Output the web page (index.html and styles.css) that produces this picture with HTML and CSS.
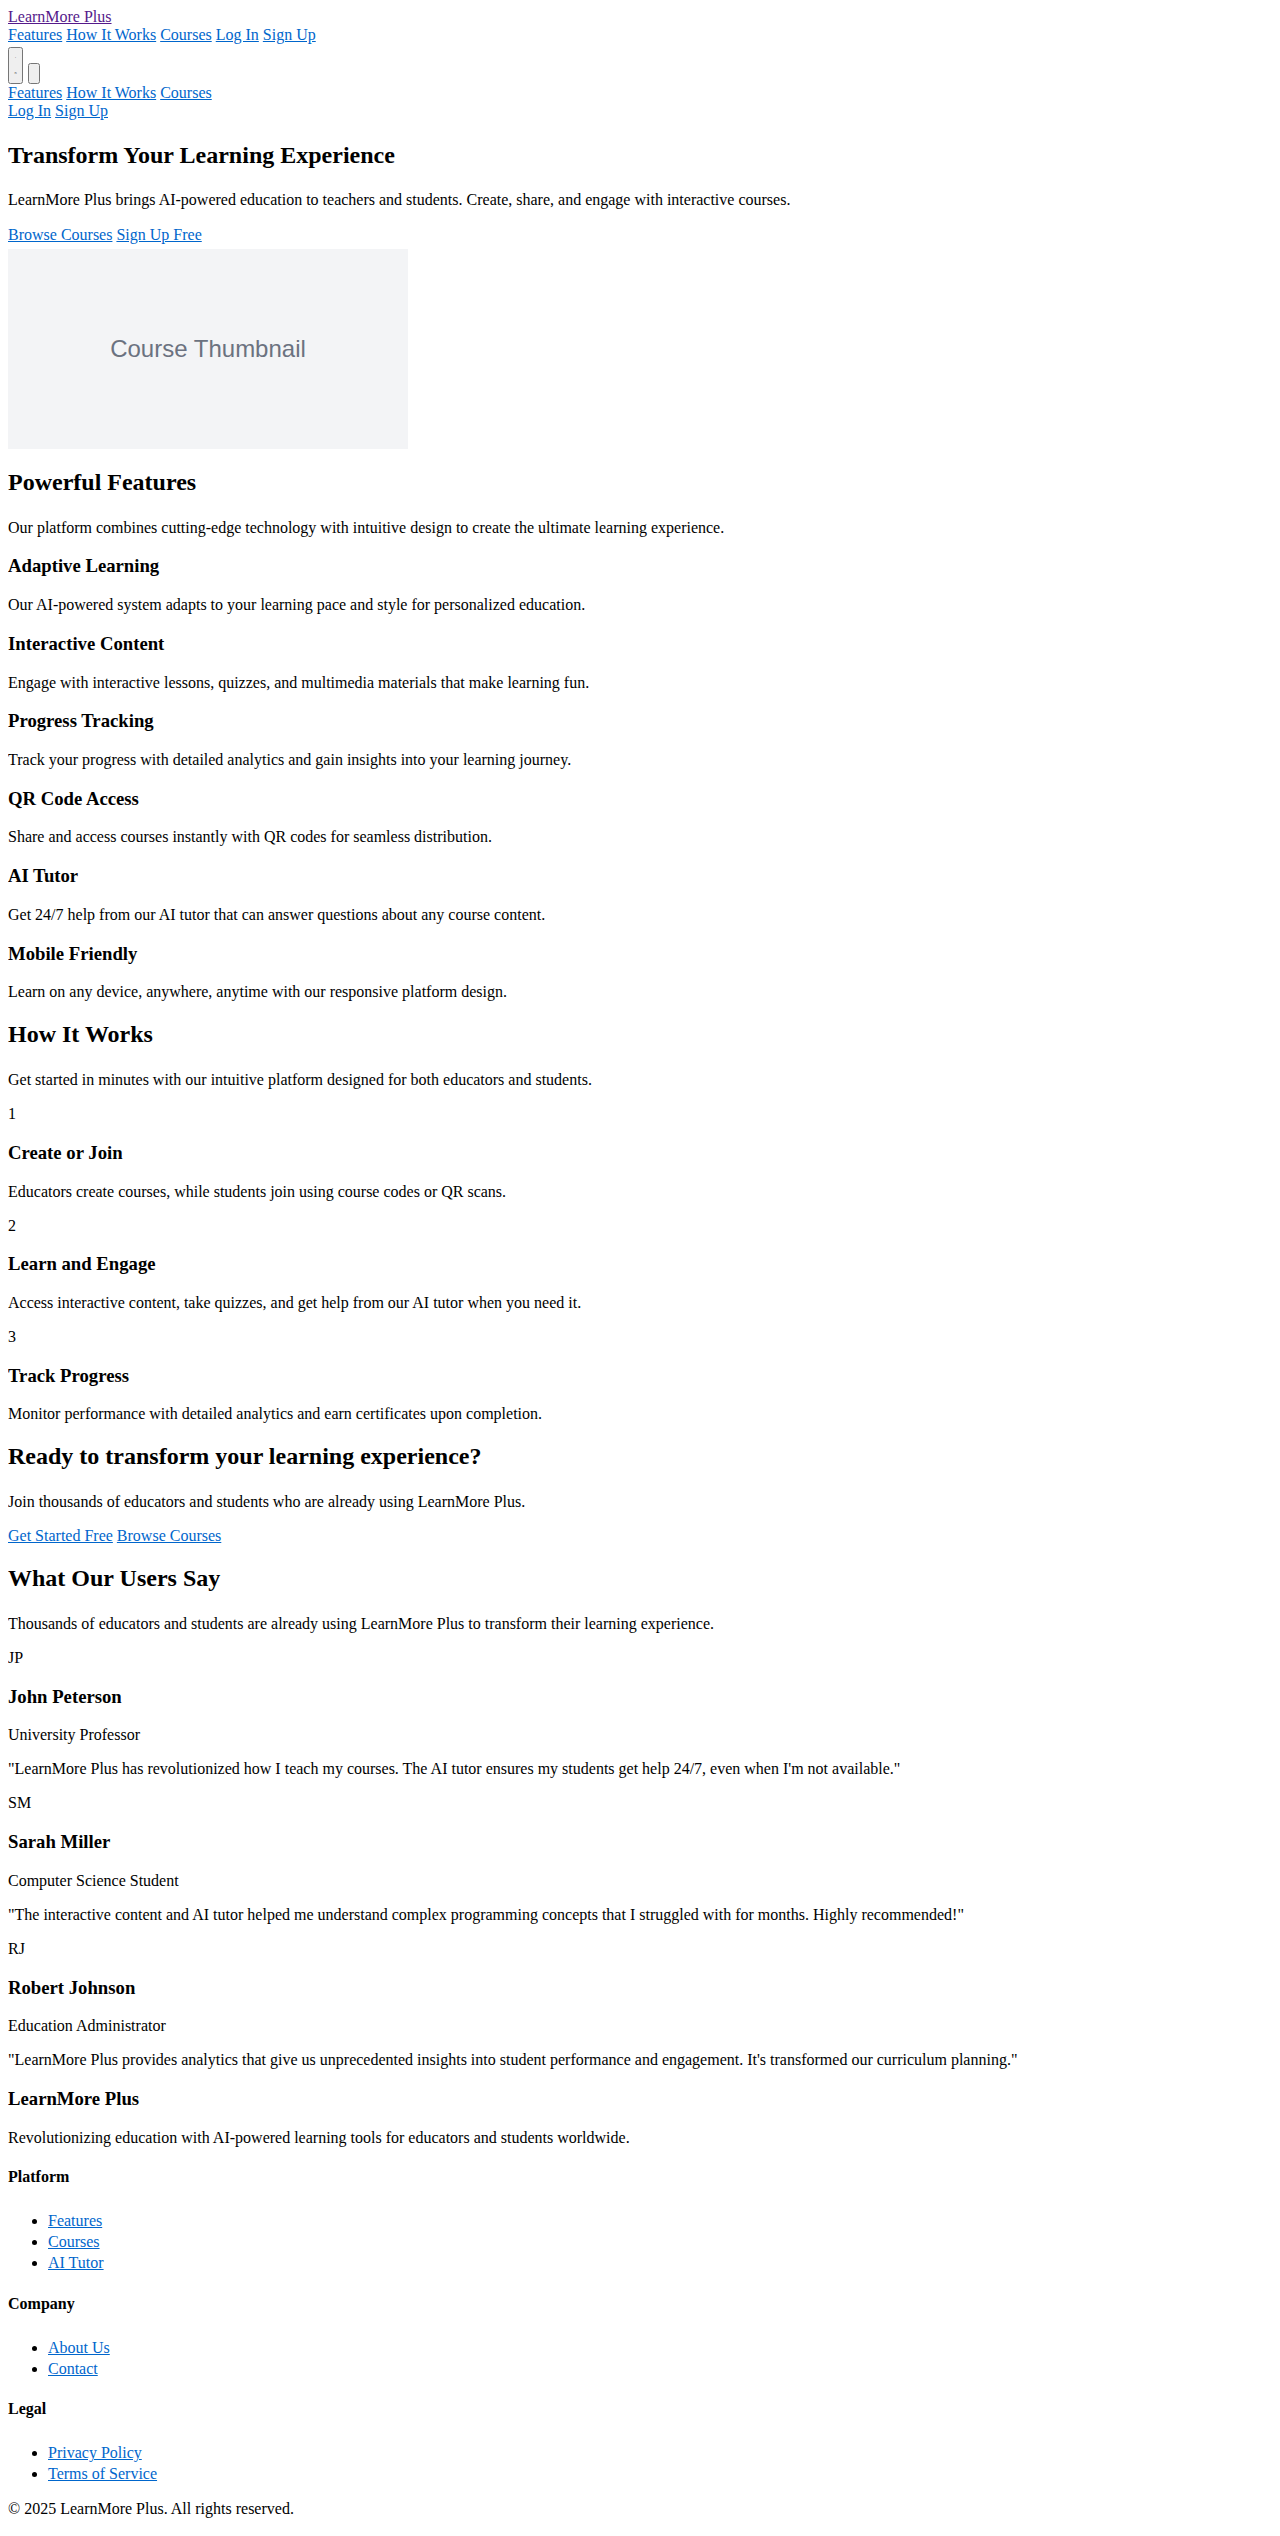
FILE: index.html
```html
<!DOCTYPE html>
<html lang="en">
<head>
<meta charset="utf-8">
<title>LearnMore Plus</title>
<link rel="stylesheet" href="styles.css">
</head>
<body class="page">
<header class="site-header">
  <div class="brand-row"><a class="link visited" href="#">LearnMore Plus</a></div>
  <nav class="nav-row">
    <a class="link" href="#features">Features</a>
    <a class="link" href="#how">How It Works</a>
    <a class="link" href="#courses">Courses</a>
    <a class="link" href="#login">Log In</a>
    <a class="link" href="#signup">Sign Up</a>
  </nav>
  <div class="btn-row">
    <button class="menu-btn" type="button"><span class="mark">&#183;</span><span class="mark">&#8319;</span></button>
    <button class="theme-btn" type="button"></button>
  </div>
  <div class="mobile-nav">
    <a class="link" href="#features">Features</a>
    <a class="link" href="#how">How It Works</a>
    <a class="link" href="#courses">Courses</a>
  </div>
  <div class="mobile-auth">
    <a class="link" href="#login">Log In</a>
    <a class="link" href="#signup">Sign Up</a>
  </div>
</header>

<main>
  <section class="hero">
    <h1 class="h1">Transform Your Learning Experience</h1>
    <p class="p">LearnMore Plus brings AI-powered education to teachers and students. Create, share, and engage with interactive courses.</p>
    <div class="hero-cta">
      <a class="link" href="#courses">Browse Courses</a>
      <a class="link" href="#signup">Sign Up Free</a>
    </div>
    <div class="thumb"><span class="thumb-text">Course Thumbnail</span></div>
  </section>

  <section class="features" id="features">
    <h2 class="h2">Powerful Features</h2>
    <p class="p">Our platform combines cutting-edge technology with intuitive design to create the ultimate learning experience.</p>
    <div class="feature">
      <h3 class="h3">Adaptive Learning</h3>
      <p class="p">Our AI-powered system adapts to your learning pace and style for personalized education.</p>
    </div>
    <div class="feature">
      <h3 class="h3">Interactive Content</h3>
      <p class="p">Engage with interactive lessons, quizzes, and multimedia materials that make learning fun.</p>
    </div>
    <div class="feature">
      <h3 class="h3">Progress Tracking</h3>
      <p class="p">Track your progress with detailed analytics and gain insights into your learning journey.</p>
    </div>
    <div class="feature">
      <h3 class="h3">QR Code Access</h3>
      <p class="p">Share and access courses instantly with QR codes for seamless distribution.</p>
    </div>
    <div class="feature">
      <h3 class="h3">AI Tutor</h3>
      <p class="p">Get 24/7 help from our AI tutor that can answer questions about any course content.</p>
    </div>
    <div class="feature">
      <h3 class="h3">Mobile Friendly</h3>
      <p class="p">Learn on any device, anywhere, anytime with our responsive platform design.</p>
    </div>
  </section>

  <section class="how" id="how">
    <h2 class="h2">How It Works</h2>
    <p class="p">Get started in minutes with our intuitive platform designed for both educators and students.</p>
    <div class="step">
      <div class="step-num">1</div>
      <h3 class="h3">Create or Join</h3>
      <p class="p">Educators create courses, while students join using course codes or QR scans.</p>
    </div>
    <div class="step">
      <div class="step-num">2</div>
      <h3 class="h3">Learn and Engage</h3>
      <p class="p">Access interactive content, take quizzes, and get help from our AI tutor when you need it.</p>
    </div>
    <div class="step">
      <div class="step-num">3</div>
      <h3 class="h3">Track Progress</h3>
      <p class="p">Monitor performance with detailed analytics and earn certificates upon completion.</p>
    </div>
  </section>

  <section class="cta">
    <h2 class="h2">Ready to transform your learning experience?</h2>
    <p class="p">Join thousands of educators and students who are already using LearnMore Plus.</p>
    <div class="cta-row">
      <a class="link" href="#signup">Get Started Free</a>
      <a class="link" href="#courses">Browse Courses</a>
    </div>
  </section>

  <section class="testimonials">
    <h2 class="h2">What Our Users Say</h2>
    <p class="p">Thousands of educators and students are already using LearnMore Plus to transform their learning experience.</p>
    <div class="testimonial">
      <div class="avatar">JP</div>
      <h3 class="h3">John Peterson</h3>
      <p class="p">University Professor</p>
      <p class="p">"LearnMore Plus has revolutionized how I teach my courses. The AI tutor ensures my students get help 24/7, even when I'm not available."</p>
    </div>
    <div class="testimonial">
      <div class="avatar">SM</div>
      <h3 class="h3">Sarah Miller</h3>
      <p class="p">Computer Science Student</p>
      <p class="p">"The interactive content and AI tutor helped me understand complex programming concepts that I struggled with for months. Highly recommended!"</p>
    </div>
    <div class="testimonial">
      <div class="avatar">RJ</div>
      <h3 class="h3">Robert Johnson</h3>
      <p class="p">Education Administrator</p>
      <p class="p">"LearnMore Plus provides analytics that give us unprecedented insights into student performance and engagement. It's transformed our curriculum planning."</p>
    </div>
  </section>
</main>

<footer class="site-footer">
  <div class="footer-brand">
    <h3 class="h3">LearnMore Plus</h3>
    <p class="p">Revolutionizing education with AI-powered learning tools for educators and students worldwide.</p>
  </div>
  <div class="footer-col">
    <h4 class="h4">Platform</h4>
    <ul class="list">
      <li class="list-item"><a class="link" href="#features">Features</a></li>
      <li class="list-item"><a class="link" href="#courses">Courses</a></li>
      <li class="list-item"><a class="link" href="#tutor">AI Tutor</a></li>
    </ul>
  </div>
  <div class="footer-col">
    <h4 class="h4">Company</h4>
    <ul class="list">
      <li class="list-item"><a class="link" href="#about">About Us</a></li>
      <li class="list-item"><a class="link" href="#contact">Contact</a></li>
    </ul>
  </div>
  <div class="footer-col">
    <h4 class="h4">Legal</h4>
    <ul class="list">
      <li class="list-item"><a class="link" href="#privacy">Privacy Policy</a></li>
      <li class="list-item"><a class="link" href="#terms">Terms of Service</a></li>
    </ul>
  </div>
  <div class="copyright">&#169; 2025 LearnMore Plus. All rights reserved.</div>
</footer>
</body>
</html>
```

FILE: styles.css
```css
.page {
  margin: 8px;
  font-family: "Liberation Serif", "Times New Roman", serif;
  font-size: 16px;
  color: #000;
  background: #fff;
}

.link {
  color: #0066cc;
  text-decoration: underline;
}

.link.visited {
  color: #551a8b;
}

.site-header {
  padding-bottom: 2px;
}

/* h1 inside a section: same size as h2 */
.h1 {
  font-size: 1.5em;
  font-weight: bold;
  margin: 0.83em 0;
}

.h2 {
  font-size: 1.5em;
  font-weight: bold;
  margin: 0.83em 0;
  padding-bottom: 3px;
}

.h3 {
  font-size: 1.17em;
  font-weight: bold;
  margin: 1em 0;
}

.h4 {
  font-size: 1em;
  font-weight: bold;
  margin: 1.33em 0;
}

.p {
  margin: 1em 0;
}

.hero .p {
  padding-top: 2px;
}

.hero-cta {
  padding-top: 1px;
  padding-bottom: 5px;
}

.list {
  margin: 1em 0;
  padding-top: 3px;
  padding-left: 40px;
  list-style: disc;
}

.list-item {
  line-height: 21px;
}

.btn-row {
  line-height: normal;
  padding-top: 3px;
}

.menu-btn {
  width: 15px;
  height: 37px;
  padding: 0;
  vertical-align: bottom;
  display: inline-flex;
  flex-direction: column;
  align-items: center;
  justify-content: space-around;
  font-size: 6px;
  line-height: 1;
  color: #555;
}

.mark {
  display: block;
}

.theme-btn {
  width: 12px;
  height: 21px;
  padding: 0;
  margin-left: 1px;
  vertical-align: bottom;
}

.thumb {
  width: 400px;
  height: 200px;
  margin-bottom: 5px;
  background: #f3f4f6;
  display: flex;
  align-items: center;
  justify-content: center;
}

.thumb-text {
  font-family: "Liberation Sans", Arial, sans-serif;
  font-size: 24px;
  color: #6b7280;
}
```
